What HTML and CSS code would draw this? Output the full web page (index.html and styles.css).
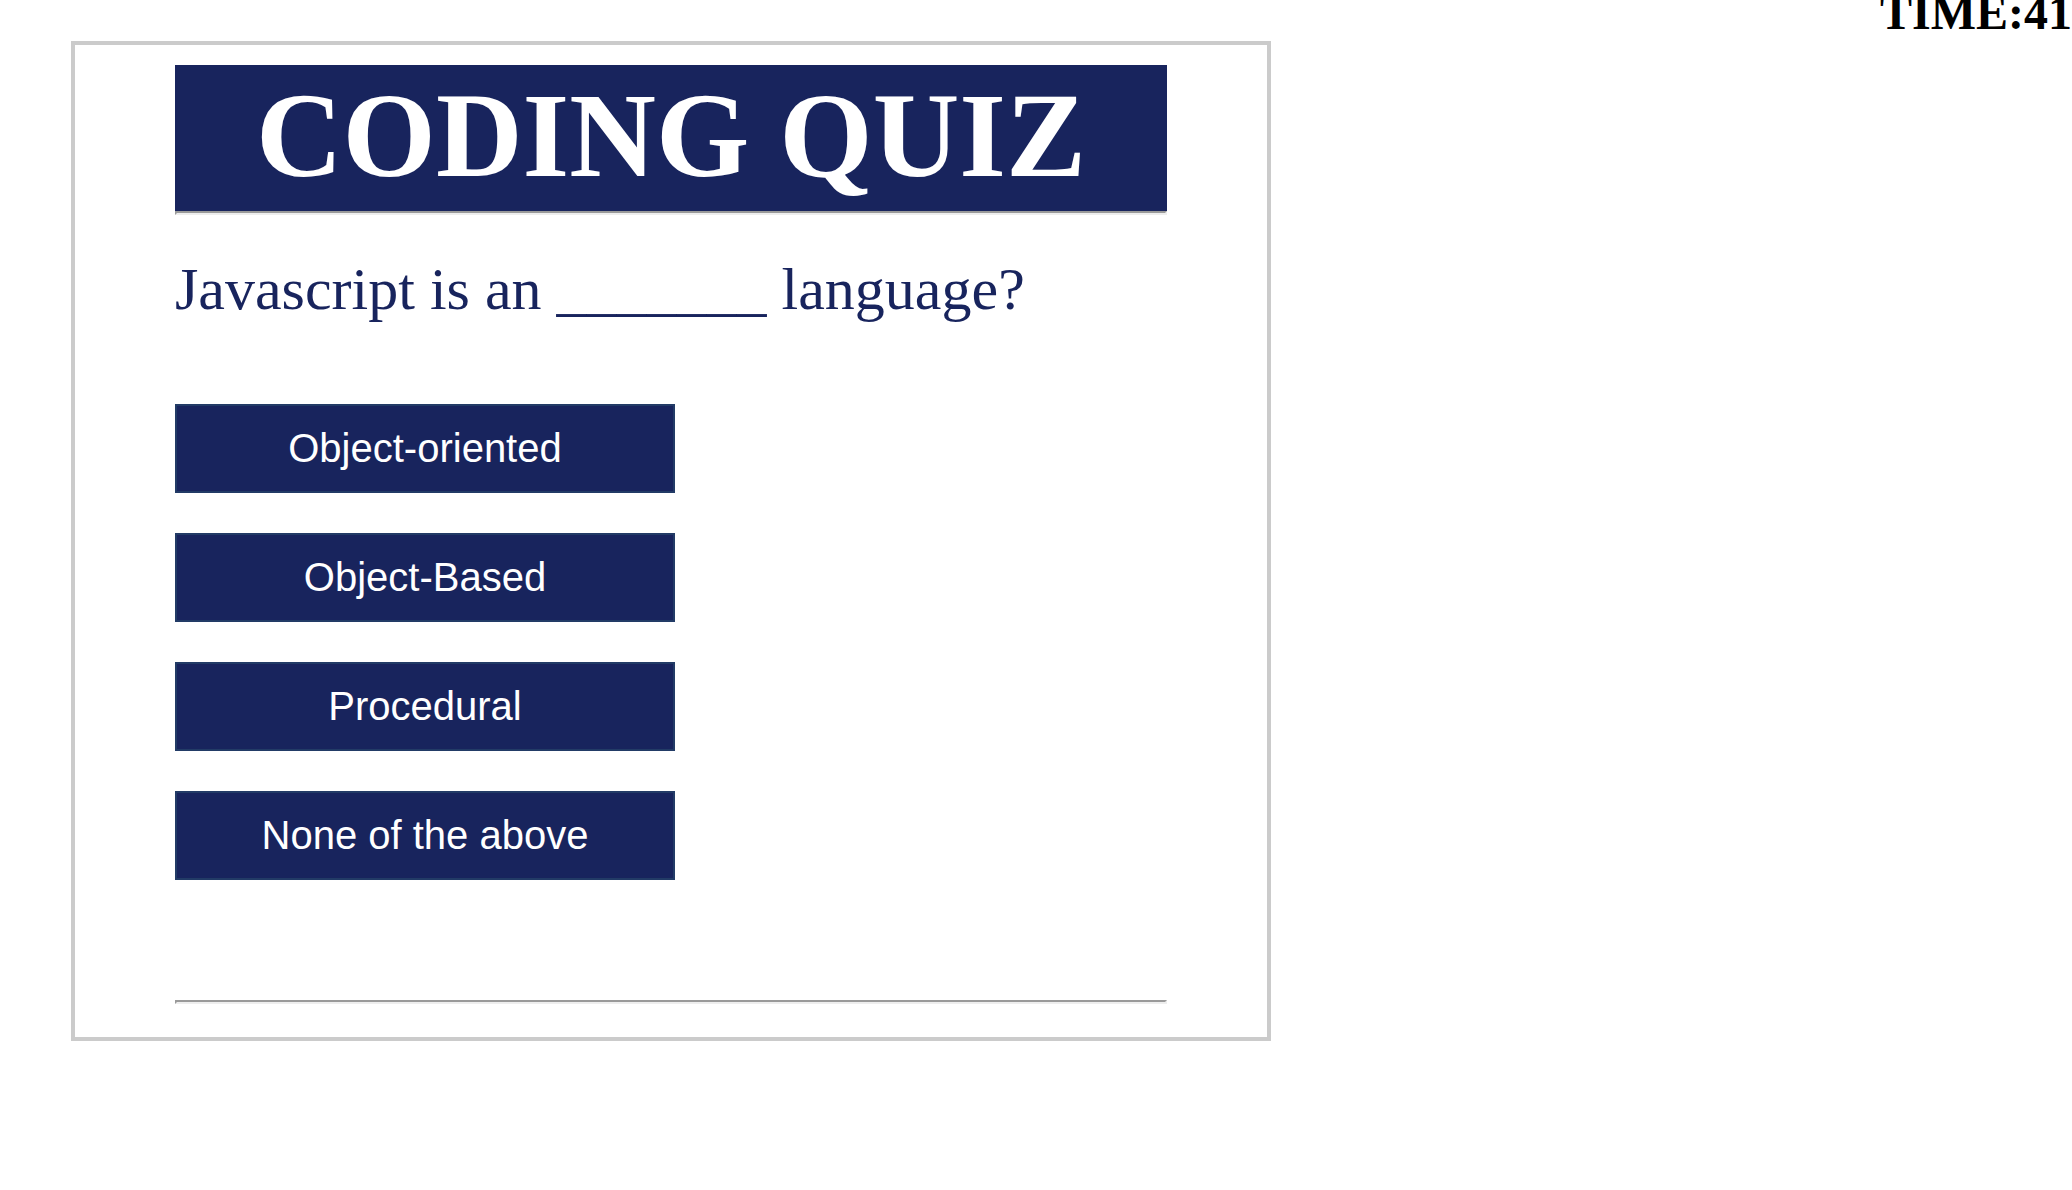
FILE: index.html
```html
<!DOCTYPE html>
<html lang="en">
<head>
<meta charset="utf-8">
<title>Coding Quiz</title>
<link rel="stylesheet" href="styles.css">
</head>
<body>
<div class="timer">TIME:41</div>
<main class="quiz">
  <h1 class="title">CODING QUIZ</h1>
  <hr class="rule">
  <p class="question">Javascript is an _______ language?</p>
  <div class="answers">
    <button class="answer" type="button">Object-oriented</button>
    <button class="answer" type="button">Object-Based</button>
    <button class="answer" type="button">Procedural</button>
    <button class="answer" type="button">None of the above</button>
  </div>
  <hr class="rule">
</main>
</body>
</html>
```
FILE: styles.css
```css
* {
  box-sizing: border-box;
}

body {
  margin: 0;
  background: #fff;
  color: #000;
  font-family: "Liberation Serif", "Times New Roman", serif;
}

.timer {
  position: absolute;
  top: -15px;
  right: 0;
  font-size: 48px;
  line-height: 56px;
  font-weight: bold;
}

.quiz {
  width: 1200px;
  max-width: 92%;
  margin: 41px 0 0 71px;
  padding: 20px 100px 33px;
  border: 4px solid #cbcbcb;
}

.title {
  margin: 0;
  padding-bottom: 4px;
  background: #18245d;
  color: #fff;
  font-size: 120px;
  line-height: 142px;
  text-align: center;
}

.rule {
  margin: 0;
  border: 2px solid;
  border-color: #9a9a9a #eee #eee #9a9a9a;
}

.question {
  margin: 40px 0 81px;
  color: #18245d;
  font-size: 60px;
  line-height: 68px;
}

.answers {
  display: flex;
  flex-direction: column;
  gap: 40px;
  max-width: 500px;
  margin-bottom: 120px;
}

.answer {
  padding: 0;
  border: 2px solid #223b66;
  background: #18245d;
  color: #fff;
  font-family: "Liberation Sans", Arial, sans-serif;
  font-size: 40px;
  line-height: 85px;
}
```
